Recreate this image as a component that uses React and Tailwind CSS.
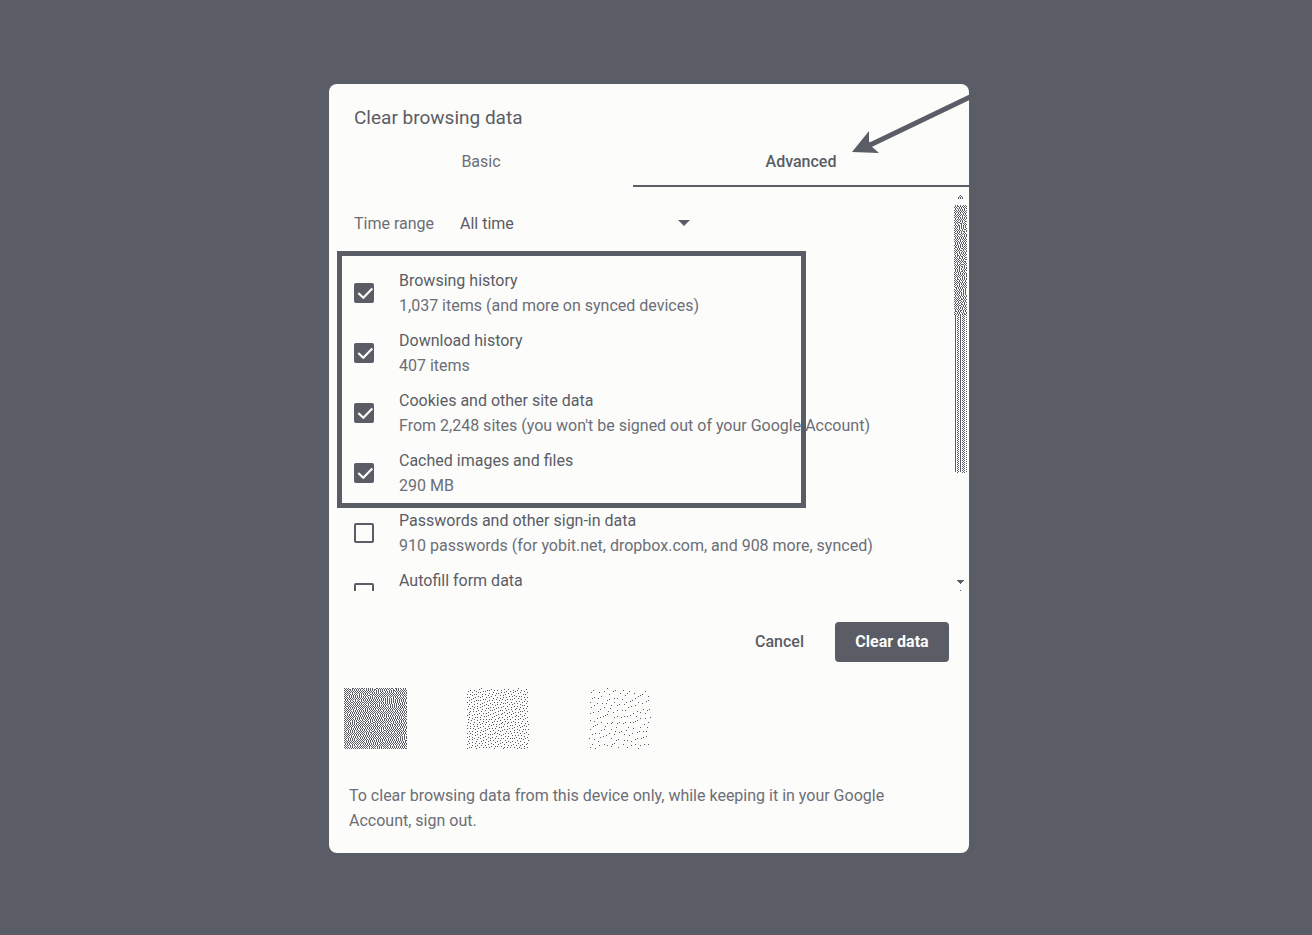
import React from "react";

// Floyd–Steinberg dithering of an even tone, returned as one path of unit squares.
function ditherPath(width, height, tone, seed, jitter = 0.06) {
  let state = seed;
  const random = () => {
    state = (state * 1664525 + 1013904223) % 4294967296;
    return state / 4294967296;
  };
  let row = Array.from({ length: width + 2 }, () => (random() - 0.5) * 0.5);
  let d = "";
  for (let y = 0; y < height; y++) {
    const next = new Array(width + 2).fill(0);
    for (let x = 0; x < width; x++) {
      const value = tone + row[x + 1];
      const on = value + (random() - 0.5) * jitter > 0.5;
      const error = value - (on ? 1 : 0);
      if (on) d += `M${x} ${y}h1v1h-1z`;
      row[x + 2] += (error * 7) / 16;
      next[x] += (error * 3) / 16;
      next[x + 1] += (error * 5) / 16;
      next[x + 2] += error / 16;
    }
    row = next;
  }
  return d;
}

const swatches = [
  { name: "Dark", path: ditherPath(63, 61, 0.48, 7) },
  { name: "Medium", path: ditherPath(63, 61, 0.13, 21, 0.2) },
  { name: "Light", path: ditherPath(63, 61, 0.045, 5, 0.6) },
];

const thumbTop = ditherPath(13, 110, 0.47, 11, 0.2);

function thumbStripes() {
  let d = "M1 110h1v157h-1zM6 110h1v157h-1z";
  for (let y = 110; y < 268; y++) {
    const columns = y % 2 ? [3, 8, 10] : [4, 9, 12];
    columns.forEach((x) => {
      d += `M${x} ${y}h1v1h-1z`;
    });
  }
  return d;
}
const thumbBottom = thumbStripes();

const selected = [
  ["history", "Browsing history", "1,037 items (and more on synced devices)"],
  ["downloads", "Download history", "407 items"],
  ["cookies", "Cookies and other site data", "From 2,248 sites (you won't be signed out of your Google Account)"],
  ["cache", "Cached images and files", "290 MB"],
];
const unselected = [
  ["passwords", "Passwords and other sign-in data", "910 passwords (for yobit.net, dropbox.com, and 908 more, synced)"],
  ["autofill", "Autofill form data", ""],
];

function Row({ id, title, detail, checked }) {
  return (
    <label htmlFor={id} className="flex h-[50px] items-center gap-[25px]">
      <span className="relative size-5 shrink-0">
        <input
          id={id}
          type="checkbox"
          defaultChecked={checked}
          className="peer block size-5 appearance-none rounded-[2px] border-2 border-[#5a5c66] checked:bg-[#5a5c66]"
        />
        <svg
          viewBox="0 0 20 20"
          className="pointer-events-none absolute inset-0 hidden size-5 peer-checked:block"
          fill="none"
          stroke="#fcfcfa"
          strokeWidth="2.2"
        >
          <path d="M4.3 10l5 4.7L18.3 5.5" />
        </svg>
      </span>
      <span className="flex h-full flex-col whitespace-nowrap leading-[25px]">
        <span>{title}</span>
        <span className="text-[#6c6e77]">{detail}</span>
      </span>
    </label>
  );
}

export default function App() {
  return (
    <div className="min-h-screen bg-[#5a5c66] py-[84px] pr-[14px] font-['Roboto',sans-serif] text-base text-[#5a5c66]">
      <main
        role="dialog"
        aria-labelledby="dialog-title"
        className="relative mx-auto max-w-[640px] overflow-hidden rounded-[8px] bg-[#fcfcfa] pb-5"
      >
        <h1 id="dialog-title" className="px-[25px] pt-[21px] text-[19px] leading-[25px]">
          Clear browsing data
        </h1>
        <div role="tablist" className="mt-1.5 grid grid-cols-[19fr_21fr]">
          <button role="tab" aria-selected="false" className="h-[51px] border-b-2 border-transparent pt-0.5 text-[#6c6e77]">
            Basic
          </button>
          <button role="tab" aria-selected="true" className="h-[51px] border-b-2 border-[#5a5c66] pt-0.5 font-medium">
            Advanced
          </button>
        </div>

        <section className="flex h-[404px] overflow-hidden">
          <div className="min-w-0 flex-1 pl-[25px] pt-6">
            <div className="flex h-[25px] items-center">
              <label htmlFor="range" className="w-[106px] text-[#6c6e77]">
                Time range
              </label>
              <span className="relative w-[232px]">
                <select id="range" className="block w-full appearance-none bg-transparent leading-[25px]">
                  <option>All time</option>
                </select>
                <svg viewBox="0 0 12 6" className="pointer-events-none absolute right-0.5 top-[9px] h-1.5 w-3">
                  <path d="M0 0h12L6 6z" fill="#5a5c66" />
                </svg>
              </span>
            </div>
            <div className="relative mt-8 flex flex-col gap-[10px]">
              {selected.map(([id, title, detail]) => (
                <Row key={id} id={id} title={title} detail={detail} checked />
              ))}
              <div className="pointer-events-none absolute -bottom-[10px] -left-[17px] -top-[17px] w-[469px] border-[5px] border-[#5a5c66]" />
            </div>
            <div className="mt-[10px] flex flex-col gap-[10px]">
              {unselected.map(([id, title, detail]) => (
                <Row key={id} id={id} title={title} detail={detail} />
              ))}
            </div>
          </div>
          <svg viewBox="0 0 15 404" className="h-[404px] w-[15px] shrink-0" fill="#5a5c66" shapeRendering="crispEdges" aria-hidden="true">
            <path d="M6 8h1v1h-1zM5 9h1v1h-1zM7 9h1v1h-1zM4 10h1v2h-1zM6 10h1v2h-1zM8 10h1v2h-1z" />
            <g transform="translate(0 18)">
              <path d={thumbTop} />
              <path d={thumbBottom} />
            </g>
            <path d="M3 393h7v1h-1v1h-1v1h-1v1h-1v-1h-1v-1h-1v-1h-1zM6 403h1v1h-1z" />
          </svg>
        </section>

        <div className="mt-[31px] flex justify-end gap-[10px] pr-5">
          <button className="h-10 rounded-[4px] px-[21px] font-medium">Cancel</button>
          <button className="h-10 w-[114px] rounded-[4px] bg-[#5a5c66] font-bold text-[#fcfcfa]">Clear data</button>
        </div>

        <div className="mt-[26px] flex gap-[59px] pl-[15px]">
          {swatches.map(({ name, path }) => (
            <svg key={name} viewBox="0 0 63 61" className="h-[61px] w-[63px]" fill="#5a5c66" shapeRendering="crispEdges" aria-hidden="true">
              <path d={path} />
            </svg>
          ))}
        </div>

        <p className="mt-[34px] px-5 pr-[60px] leading-[25px] text-[#6c6e77]">
          To clear browsing data from this device only, while keeping it in your Google Account,{" "}
          <a href="#sign-out">sign out</a>.
        </p>

        <svg viewBox="0 0 117 58" className="pointer-events-none absolute right-0 top-[11px] h-[58px] w-[117px]" aria-hidden="true">
          <path d="M118 2L16 51" stroke="#5a5c66" strokeWidth="5" />
          <path d="M0 57L17 36V46L19 51L27 58z" fill="#5a5c66" />
        </svg>
      </main>
    </div>
  );
}
